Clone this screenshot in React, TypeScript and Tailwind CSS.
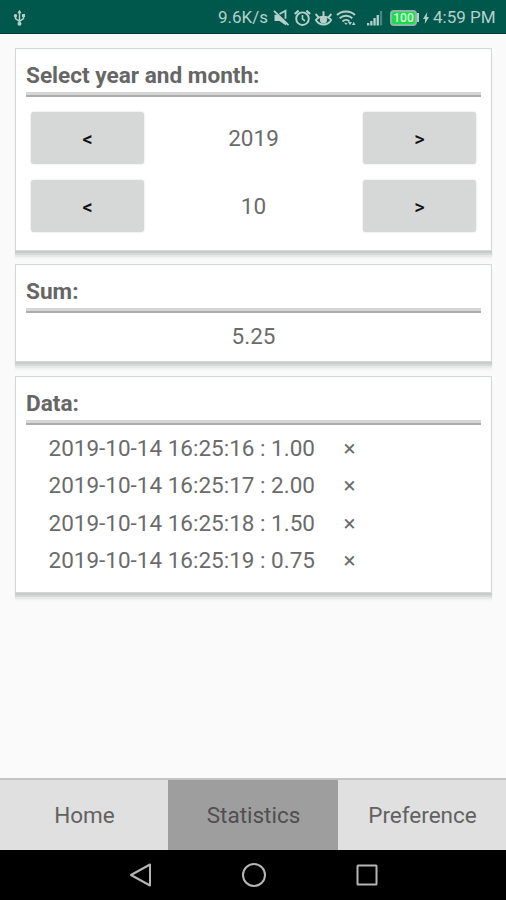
import type { ReactNode } from "react";

const RECORDS = [
  { time: "2019-10-14 16:25:16", value: "1.00" },
  { time: "2019-10-14 16:25:17", value: "2.00" },
  { time: "2019-10-14 16:25:18", value: "1.50" },
  { time: "2019-10-14 16:25:19", value: "0.75" },
];

const TABS = ["Home", "Statistics", "Preference"];

function StatusBar() {
  return (
    <header className="flex h-[34px] shrink-0 items-center border-b border-[#003a31] bg-[#00574b] pt-[2px] pr-[11px] pl-[13px] text-[#b5d0cb]">
      <svg width="13" height="18" viewBox="0 0 13 18" fill="none" stroke="currentColor" strokeWidth="1.5">
        <path d="M6.5 2v13M2.5 6.5v3.2l4 2.6 4-2.6V6.5" />
        <path d="M6.5 0.8 4.4 4.2h4.2z" fill="currentColor" stroke="none" />
        <circle cx="2.5" cy="6.7" r="1.7" fill="currentColor" stroke="none" />
        <path d="M9 5h3v3H9z" fill="currentColor" stroke="none" />
        <circle cx="6.5" cy="14.8" r="2" fill="currentColor" stroke="none" />
      </svg>
      <span className="ml-auto w-[51px] text-[17px] leading-none whitespace-nowrap">9.6K/s</span>
      <svg className="ml-[4px]" width="17" height="18" viewBox="0 0 17 18" fill="none" stroke="currentColor" strokeWidth="1.8">
        <path d="M6.5 5 12.5 1.8v8" />
        <path d="M1.5 5.8h3.2l8.3 7.4v3.4l-6.5-4.6h-5z" fill="currentColor" stroke="none" />
        <path d="m1 1.8 14.5 14.4" />
      </svg>
      <svg className="ml-[4px]" width="17" height="18" viewBox="0 0 17 18" fill="none" stroke="currentColor" strokeWidth="1.9">
        <circle cx="8.5" cy="9.7" r="6.3" />
        <path d="M8.5 6v4l2.5 1.8" strokeWidth="1.6" />
        <path d="M0.8 5 4.6 1.6M16.2 5l-3.8-3.4" strokeWidth="2.1" />
      </svg>
      <svg className="ml-[3px]" width="19" height="18" viewBox="0 0 19 18" fill="none" stroke="currentColor" strokeWidth="1.8">
        <path d="M1.8 11c3.6-4.4 11.8-4.4 15.4 0-3.6 6-11.8 6-15.4 0z" />
        <circle cx="9.5" cy="10.8" r="2.7" fill="currentColor" />
        <path d="M9.5 7.5V2.2M4.6 8.3 1.6 5M14.4 8.3l3-3.3" strokeWidth="2" />
      </svg>
      <svg className="ml-[3px]" width="20" height="18" viewBox="0 0 20 18" fill="none" stroke="currentColor" strokeWidth="2">
        <path d="M1 6c5-4.8 13-4.8 18 0M3.7 9.3c3.6-3.3 9-3.3 12.6 0M6.5 12.4c2-1.8 5-1.8 7 0" />
        <path d="m8 13.6 2 2.4 1.6-2z" fill="currentColor" stroke="none" />
        <path d="m12 13 2 3.2 2-3.2zM16 16l1.7-3.2 1.8 3.2z" fill="currentColor" stroke="none" />
      </svg>
      <svg className="ml-[11px]" width="17" height="16" viewBox="0 0 17 16" fill="currentColor">
        <path d="M0 13h2.3v2.5H0zM3.2 11h2.3v4.5H3.2zM6.4 8h2.3v7.5H6.4zM9.6 5h2.3v10.5H9.6z" />
        <path d="M12.8 1h2.4v14.5h-2.4z" opacity=".4" />
      </svg>
      <div className="ml-[6px] flex h-[16px] w-[27px] items-center justify-center rounded-[4px] border-2 border-[#8fb5a9] bg-[#1ddb49] text-[12px] leading-none font-medium text-[#d8ffe0]">
        100
      </div>
      <div className="h-[9px] w-[2px] bg-[#b5d0cb]" />
      <svg className="ml-[4px]" width="6" height="12" viewBox="0 0 6 12" fill="currentColor">
        <path d="M4.3 0 0 6.9h2.2L1.7 12 6 5H3.7z" />
      </svg>
      <span className="ml-[4px] w-[62px] text-[17px] leading-none whitespace-nowrap">4:59 PM</span>
    </header>
  );
}

function Card({ title, className, children }: { title: string; className: string; children: ReactNode }) {
  return (
    <section
      className={`border border-[#d2d8d7] bg-white px-[10px] shadow-[0_2px_0_#c9cbca,0_4px_0_#d7d9d8,0_6px_1px_#e8e9e9,0_8px_2px_#f3f3f3] ${className}`}
    >
      <h2 className="pt-[13px] text-[22.6px] leading-[28px] font-bold text-[#666]">{title}</h2>
      <div className="mt-[2px] h-[5px] border-b-2 border-[#acacac] bg-[#d6d6d6]" />
      {children}
    </section>
  );
}

function StepButton({ label }: { label: string }) {
  return (
    <button className="h-[52px] w-[113px] rounded-[3px] bg-[#d6d8d7] pt-[2px] text-[20px] font-medium text-[#111] shadow-[0_0_2px_rgba(0,0,0,0.18)]">
      {label}
    </button>
  );
}

function Stepper({ value }: { value: string }) {
  return (
    <div className="flex h-[52px] items-center justify-between">
      <StepButton label="<" />
      <span className="pt-[2px] text-[22.5px]">{value}</span>
      <StepButton label=">" />
    </div>
  );
}

function App() {
  return (
    <div className="flex h-[900px] w-[506px] flex-col overflow-hidden bg-[#fafafa] font-[Roboto,sans-serif] text-[#6b6b6b]">
      <StatusBar />

      <main className="flex flex-1 flex-col pt-[14px] pr-[14px] pl-[15px]">
        <Card title="Select year and month:" className="h-[203px]">
          <div className="flex flex-col gap-[16px] px-[5px] pt-[15px]">
            <Stepper value="2019" />
            <Stepper value="10" />
          </div>
        </Card>

        <Card title="Sum:" className="mt-[13px] h-[98px]">
          <p className="pt-[8px] text-center text-[22.5px] leading-[30px]">5.25</p>
        </Card>

        <Card title="Data:" className="mt-[14px] h-[217px]">
          <ul className="pt-[4px] pl-[22.5px]">
            {RECORDS.map((record) => (
              <li key={record.time} className="flex h-[37.5px] items-center text-[22.5px] leading-none">
                <span className="w-[289px] whitespace-nowrap">
                  {record.time} : {record.value}
                </span>
                <button className="w-[24px]">×</button>
              </li>
            ))}
          </ul>
        </Card>
      </main>

      <nav className="flex h-[72px] shrink-0 border-t-2 border-[#c4c4c4]">
        {TABS.map((tab) => (
          <button
            key={tab}
            className={`pt-[2px] pl-[1px] text-[22.5px] ${
              tab === "Statistics"
                ? "w-[170px] bg-[#9e9e9e] text-[#4f4f4f]"
                : "w-[168px] bg-[#e0e0e0] text-[#626262]"
            }`}
          >
            {tab}
          </button>
        ))}
      </nav>

      <footer className="flex h-[50px] shrink-0 items-center justify-center gap-[88px] bg-black pl-[1px] text-[#b5b5b5]">
        <svg width="24" height="26" viewBox="0 0 24 26" fill="none" stroke="currentColor" strokeWidth="2">
          <path d="M21 2.5v21L2 13z" strokeLinejoin="round" />
        </svg>
        <svg width="26" height="26" viewBox="0 0 26 26" fill="none" stroke="currentColor" strokeWidth="2">
          <circle cx="13" cy="13" r="11" />
        </svg>
        <svg width="24" height="24" viewBox="0 0 24 24" fill="none" stroke="currentColor" strokeWidth="2">
          <rect x="2.5" y="2.5" width="19" height="19" rx="0.5" />
        </svg>
      </footer>
    </div>
  );
}

export default App;
